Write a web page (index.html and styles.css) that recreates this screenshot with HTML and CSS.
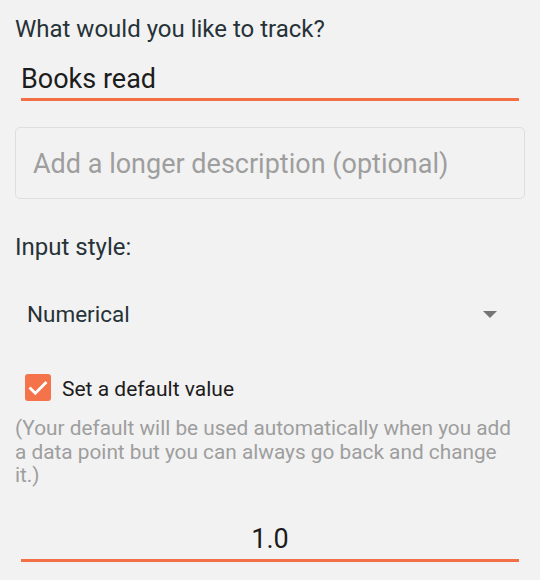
FILE: index.html
```html
<!DOCTYPE html>
<html lang="en">
<head>
<meta charset="utf-8">
<link rel="stylesheet" href="styles.css">
</head>
<body>
<main class="form">
  <label class="title">What would you like to track?</label>
  <div class="line-input name">Books read</div>
  <div class="desc-box"><span class="placeholder">Add a longer description (optional)</span></div>
  <div class="section-label">Input style:</div>
  <div class="select">
    <span class="select-value">Numerical</span>
    <span class="caret"></span>
  </div>
  <div class="check-row">
    <span class="checkbox">
      <svg viewBox="0 0 26 26" width="26" height="26"><path d="M5.5 13.5l4.8 4.8L20.5 8" fill="none" stroke="#fff" stroke-width="2.8" stroke-linecap="square"/></svg>
    </span>
    <span class="check-label">Set a default value</span>
  </div>
  <p class="help">(Your default will be used automatically when you add a data point but you can always go back and change it.)</p>
  <div class="line-input value">1.0</div>
</main>
</body>
</html>
```
FILE: styles.css
```css
html, body {
  margin: 0;
  padding: 0;
  background: #f2f2f2;
}
body {
  font-family: Roboto, "Noto Sans", sans-serif;
  width: 540px;
  height: 580px;
  overflow: hidden;
}
.form {
  display: flex;
  flex-direction: column;
  padding: 14.5px 15px 0 15px;
}
.title {
  font-size: 24px;
  line-height: 28px;
  color: #263238;
}
.line-input {
  margin: 0 6px;
  font-size: 27px;
  line-height: 32px;
  color: #1c1c1c;
  border-bottom: 3px solid #f36f45;
}
.name {
  margin-top: 20.6px;
  padding-bottom: 3.2px;
}
.desc-box {
  box-sizing: border-box;
  margin-top: 26px;
  height: 72px;
  border: 1px solid #dedede;
  border-radius: 5px;
  padding: 19.5px 0 0 17px;
}
.placeholder {
  display: block;
  font-size: 27px;
  line-height: 32px;
  color: #9e9e9e;
}
.section-label {
  margin-top: 34.2px;
  font-size: 24px;
  line-height: 28px;
  color: #263238;
}
.select {
  display: flex;
  align-items: center;
  justify-content: space-between;
  margin-top: 38.5px;
  padding: 0 28.5px 0 12px;
  height: 28px;
}
.select-value {
  font-size: 22.5px;
  line-height: 28px;
  color: #263238;
}
.caret {
  width: 0;
  height: 0;
  margin-top: 1px;
  border-left: 7.5px solid transparent;
  border-right: 7.5px solid transparent;
  border-top: 7.5px solid #757575;
}
.check-row {
  display: flex;
  align-items: flex-start;
  margin-top: 46.5px;
  padding-left: 10px;
  gap: 11px;
}
.checkbox {
  width: 26px;
  height: 27px;
  border-radius: 3px;
  background: #f4734a;
  display: flex;
  align-items: center;
  justify-content: center;
}
.check-label {
  margin-top: 1.5px;
  font-size: 21px;
  line-height: 26px;
  color: #1c1c1c;
}
.help {
  margin: 15.4px 4px 0 0;
  font-size: 20.8px;
  line-height: 23.5px;
  color: #9e9e9e;
}
.value {
  margin-top: 35.2px;
  text-align: center;
  padding-bottom: 4.2px;
}
```
